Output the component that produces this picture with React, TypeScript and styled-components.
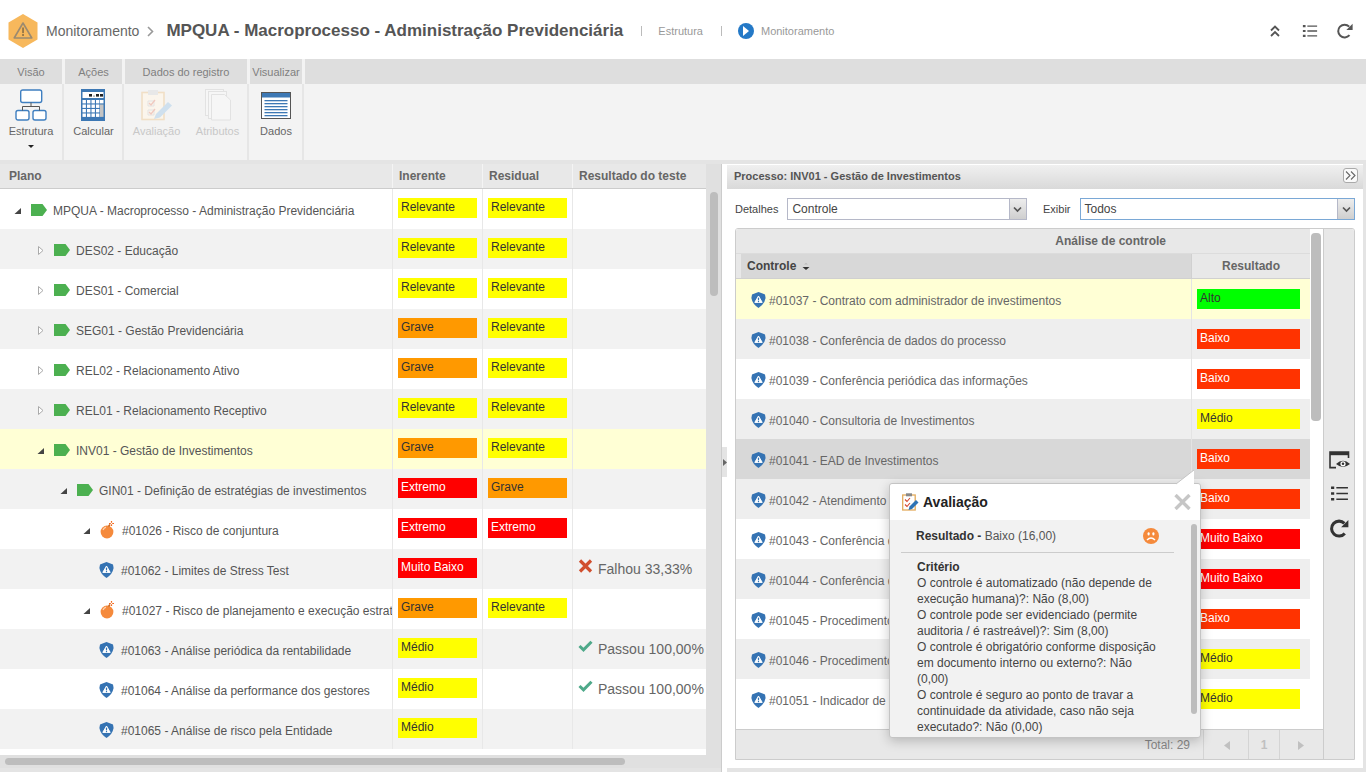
import React from 'react';
import styled, { createGlobalStyle } from 'styled-components';

type Level = 'alto' | 'baixo' | 'muitoBaixo' | 'medio' | 'relevante' | 'grave' | 'extremo';

const levelColors: Record<Level, { bg: string; fg: string; label: string }> = {
  alto: { bg: '#00ff00', fg: '#333', label: 'Alto' },
  baixo: { bg: '#ff3300', fg: '#fff', label: 'Baixo' },
  muitoBaixo: { bg: '#ff0000', fg: '#fff', label: 'Muito Baixo' },
  medio: { bg: '#ffff00', fg: '#333', label: 'Médio' },
  relevante: { bg: '#ffff00', fg: '#333', label: 'Relevante' },
  grave: { bg: '#ff9900', fg: '#333', label: 'Grave' },
  extremo: { bg: '#ff0000', fg: '#fff', label: 'Extremo' },
};

type PlanRow = {
  depth: number;
  kind: 'process' | 'risk' | 'control';
  open?: boolean;
  text: string;
  inerente: Level;
  residual?: Level;
  test?: { ok: boolean; text: string };
  selected?: boolean;
};

const planRows: PlanRow[] = [
  { depth: 0, kind: 'process', open: true, text: 'MPQUA - Macroprocesso - Administração Previdenciária', inerente: 'relevante', residual: 'relevante' },
  { depth: 1, kind: 'process', open: false, text: 'DES02 - Educação', inerente: 'relevante', residual: 'relevante' },
  { depth: 1, kind: 'process', open: false, text: 'DES01 - Comercial', inerente: 'relevante', residual: 'relevante' },
  { depth: 1, kind: 'process', open: false, text: 'SEG01 - Gestão Previdenciária', inerente: 'grave', residual: 'relevante' },
  { depth: 1, kind: 'process', open: false, text: 'REL02 - Relacionamento Ativo', inerente: 'grave', residual: 'relevante' },
  { depth: 1, kind: 'process', open: false, text: 'REL01 - Relacionamento Receptivo', inerente: 'relevante', residual: 'relevante' },
  { depth: 1, kind: 'process', open: true, text: 'INV01 - Gestão de Investimentos', inerente: 'grave', residual: 'relevante', selected: true },
  { depth: 2, kind: 'process', open: true, text: 'GIN01 - Definição de estratégias de investimentos', inerente: 'extremo', residual: 'grave' },
  { depth: 3, kind: 'risk', open: true, text: '#01026 - Risco de conjuntura', inerente: 'extremo', residual: 'extremo' },
  { depth: 4, kind: 'control', text: '#01062 - Limites de Stress Test', inerente: 'muitoBaixo', test: { ok: false, text: 'Falhou 33,33%' } },
  { depth: 3, kind: 'risk', open: true, text: '#01027 - Risco de planejamento e execução estratégica', inerente: 'grave', residual: 'relevante' },
  { depth: 4, kind: 'control', text: '#01063 - Análise periódica da rentabilidade', inerente: 'medio', test: { ok: true, text: 'Passou 100,00%' } },
  { depth: 4, kind: 'control', text: '#01064 - Análise da performance dos gestores', inerente: 'medio', test: { ok: true, text: 'Passou 100,00%' } },
  { depth: 4, kind: 'control', text: '#01065 - Análise de risco pela Entidade', inerente: 'medio' },
];

const controlRows: { text: string; level: Level }[] = [
  { text: '#01037 - Contrato com administrador de investimentos', level: 'alto' },
  { text: '#01038 - Conferência de dados do processo', level: 'baixo' },
  { text: '#01039 - Conferência periódica das informações', level: 'baixo' },
  { text: '#01040 - Consultoria de Investimentos', level: 'medio' },
  { text: '#01041 - EAD de Investimentos', level: 'baixo' },
  { text: '#01042 - Atendimento ao participante', level: 'baixo' },
  { text: '#01043 - Conferência de relatórios', level: 'muitoBaixo' },
  { text: '#01044 - Conferência de valores', level: 'muitoBaixo' },
  { text: '#01045 - Procedimento de aprovação', level: 'baixo' },
  { text: '#01046 - Procedimento de registro', level: 'medio' },
  { text: '#01051 - Indicador de desempenho', level: 'medio' },
];

const criteria = [
  'O controle é automatizado (não depende de execução humana)?: Não (8,00)',
  'O controle pode ser evidenciado (permite auditoria / é rastreável)?: Sim (8,00)',
  'O controle é obrigatório conforme disposição em documento interno ou externo?: Não (0,00)',
  'O controle é seguro ao ponto de travar a continuidade da atividade, caso não seja executado?: Não (0,00)',
];

const GlobalStyle = createGlobalStyle`
  html, body {
    margin: 0;
    height: 100%;
    overflow: hidden;
    background: #e4e4e4;
  }
  body {
    font-family: "Liberation Sans", Arial, sans-serif;
    color: #555;
  }
  * {
    box-sizing: border-box;
  }
`;

const Page = styled.div`
  width: 1366px;
  height: 772px;
  display: flex;
  flex-direction: column;
  overflow: hidden;
`;

const Header = styled.header`
  height: 59px;
  flex: none;
  background: #fff;
  display: flex;
  align-items: center;
  padding: 3px 12px 0 8px;
`;

const Crumb = styled.span`
  margin-left: 8px;
  font-size: 14px;
  color: #666;
`;

const CrumbArrow = styled.span`
  display: flex;
  margin: 0 12px 0 7px;
`;

const Title = styled.h1`
  margin: 0;
  font-size: 17px;
  font-weight: 700;
  color: #555;
  white-space: nowrap;
`;

const Divider = styled.span`
  width: 1px;
  height: 10px;
  background: #bbb;
  margin: 0 16px 0 18px;
`;

const NavLink = styled.span`
  font-size: 11px;
  color: #999;
`;

const PlayDot = styled.span`
  width: 16px;
  height: 16px;
  border-radius: 50%;
  background: #2479c7;
  display: flex;
  align-items: center;
  justify-content: center;
  margin-right: 7px;
`;

const HeaderTools = styled.div`
  margin-left: auto;
  display: flex;
  align-items: center;
  gap: 18px;
`;

const Ribbon = styled.div`
  height: 101px;
  flex: none;
  display: flex;
  background: #f3f3f3;
`;

const Group = styled.div<{ $width: number }>`
  width: ${(p) => p.$width}px;
  flex: none;
  display: flex;
  flex-direction: column;
`;

const GroupTitle = styled.div`
  height: 25px;
  flex: none;
  background: #dedede;
  margin-right: 3px;
  font-size: 11px;
  color: #808080;
  display: flex;
  align-items: center;
  justify-content: center;
`;

const RibbonRest = styled.div`
  flex: 1;
  height: 25px;
  background: #dedede;
`;

const GroupBody = styled.div`
  flex: 1;
  display: flex;
  justify-content: space-around;
  border-right: 2px solid #e6e6e6;
  margin-right: 1px;
`;

const RibbonButton = styled.div<{ $off?: boolean }>`
  display: flex;
  flex-direction: column;
  align-items: center;
  font-size: 11px;
  color: ${(p) => (p.$off ? '#c8c8c8' : '#666')};
`;

const RibbonIcon = styled.div`
  height: 41px;
  padding-top: 5px;
  display: flex;
  align-items: flex-start;
`;

const RibbonCaret = styled.span`
  width: 0;
  height: 0;
  margin-top: 8px;
  border-left: 3px solid transparent;
  border-right: 3px solid transparent;
  border-top: 3px solid #222;
`;

const Main = styled.div`
  flex: 1;
  min-height: 0;
  display: flex;
  padding-top: 4px;
  background: #e4e4e4;
`;

const LeftPanel = styled.section`
  width: 721px;
  flex: none;
  display: flex;
  flex-direction: column;
  padding-bottom: 4px;
`;

const TableArea = styled.div`
  flex: 1;
  min-height: 0;
  display: flex;
`;

const PlanTable = styled.div`
  width: 706px;
  flex: none;
  background: #fff;
  overflow: hidden;
`;

const PlanHead = styled.div`
  height: 25px;
  display: flex;
  background: #e8e8e8;
  border-bottom: 1px solid #ccc;
`;

const HeadCell = styled.div<{ $width: number }>`
  width: ${(p) => p.$width}px;
  flex: none;
  padding: 0 6px;
  font-size: 12px;
  font-weight: 700;
  color: #666;
  line-height: 24px;
  border-right: 1px solid #f4f4f4;
  &:first-child {
    padding-left: 9px;
  }
  &:last-child {
    border-right: 0;
  }
`;

const PlanLine = styled.div<{ $tone: 'plain' | 'alt' | 'selected' }>`
  height: 40px;
  display: flex;
  background: ${(p) =>
    p.$tone === 'selected' ? '#ffffd5' : p.$tone === 'alt' ? '#f2f2f2' : '#fff'};
`;

const PlanCell = styled.div<{ $width: number }>`
  width: ${(p) => p.$width}px;
  flex: none;
  border-right: 1px solid #e8e8e8;
  display: flex;
  align-items: center;
  overflow: hidden;
  &:last-child {
    border-right: 0;
  }
`;

const TreeName = styled(PlanCell)<{ $depth: number }>`
  padding-left: ${(p) => 13 + p.$depth * 23}px;
  padding-top: 4px;
  font-size: 12px;
  color: #555;
  white-space: nowrap;
`;

const TreeToggle = styled.span`
  width: 9px;
  height: 9px;
  flex: none;
  display: flex;
  margin: -2px 9px 0 0;
`;

const NodeIcon = styled.span<{ $kind: PlanRow['kind'] }>`
  flex: none;
  display: flex;
  margin-top: -2px;
  margin-left: ${(p) => (p.$kind === 'control' ? '-6px' : '0')};
  margin-right: ${(p) => (p.$kind === 'control' ? '7px' : '6px')};
`;

const Tag = styled.span<{ $level: Level; $width: number }>`
  width: ${(p) => p.$width}px;
  height: 20px;
  margin: -2px 0 0 5px;
  padding-left: 3px;
  flex: none;
  font-size: 12px;
  line-height: 19px;
  background: ${(p) => levelColors[p.$level].bg};
  color: ${(p) => levelColors[p.$level].fg};
  white-space: nowrap;
`;

const TestResult = styled.div`
  display: flex;
  align-items: center;
  gap: 5px;
  margin-left: 5px;
  font-size: 14px;
  color: #666;
  white-space: nowrap;
`;

const TestMark = styled.span`
  display: flex;
  margin-top: -6px;
`;

const VTrack = styled.div`
  width: 15px;
  flex: none;
  background: #e0e0e0;
  padding: 28px 3px 0 4px;
`;

const VThumb = styled.div<{ $h: number }>`
  height: ${(p) => p.$h}px;
  background: #bdbdbd;
  border-radius: 4px;
`;

const HTrack = styled.div`
  height: 13px;
  flex: none;
  background: #e0e0e0;
  padding: 3px 0 0 5px;
`;

const HThumb = styled.div`
  width: 620px;
  height: 7px;
  background: #bdbdbd;
  border-radius: 4px;
`;

const Splitter = styled.div`
  width: 6px;
  flex: none;
  background: #fff;
  border-left: 1px solid #ccc;
  display: flex;
  flex-direction: column;
  justify-content: flex-start;
  padding-top: 283px;
`;

const SplitterHandle = styled.div`
  width: 5px;
  height: 30px;
  background: #e4e4e4;
  display: flex;
  align-items: center;
  justify-content: center;
`;

const RightPanel = styled.section`
  position: relative;
  flex: 1;
  min-width: 0;
  display: flex;
  flex-direction: column;
  background: #fff;
  margin: 0 3px 4px 0;
  padding-top: 1px;
`;

const PanelBar = styled.div`
  height: 24px;
  flex: none;
  background: linear-gradient(#f0f0f0, #d9d9d9);
  display: flex;
  align-items: center;
  justify-content: space-between;
  padding: 0 5px 3px 7px;
  font-size: 11px;
  font-weight: 700;
  color: #555;
`;

const CollapseButton = styled.span`
  width: 15px;
  height: 15px;
  border: 1px solid #aaa;
  border-radius: 3px;
  background: #fafafa;
  display: flex;
  align-items: center;
  justify-content: center;
`;

const FilterRow = styled.div`
  height: 39px;
  flex: none;
  display: flex;
  align-items: center;
  padding: 1px 8px 0 8px;
  font-size: 11px;
  color: #444;
`;

const SelectBox = styled.div<{ $width: number; $focus?: boolean }>`
  width: ${(p) => p.$width}px;
  height: 22px;
  margin-left: 9px;
  border: 1px solid ${(p) => (p.$focus ? '#7aa8d6' : '#b5b8c8')};
  background: #fff;
  display: flex;
  align-items: center;
  justify-content: space-between;
  padding-left: 4px;
  font-size: 12px;
  color: #444;
`;

const SelectArrow = styled.span`
  width: 17px;
  height: 20px;
  background: linear-gradient(#ededed, #cfcfcf);
  border-left: 1px solid #b5b8c8;
  display: flex;
  align-items: center;
  justify-content: center;
`;

const SecondLabel = styled.span`
  margin-left: 16px;
`;

const GridFrame = styled.div`
  height: 532px;
  margin: 0 8px;
  flex: none;
  border: 1px solid #ccc;
  border-radius: 3px 3px 0 0;
  display: grid;
  grid-template-columns: 587px 1fr;
  overflow: hidden;
`;

const GridMain = styled.div`
  display: flex;
  flex-direction: column;
  min-height: 0;
  background: #fff;
`;

const GridColumns = styled.div`
  height: 500px;
  flex: none;
  display: flex;
`;

const GridTable = styled.div`
  width: 574px;
  flex: none;
  display: flex;
  flex-direction: column;
  height: 486px;
  overflow: hidden;
`;

const GridCaption = styled.div`
  height: 24px;
  flex: none;
  background: #e8e8e8;
  font-size: 12px;
  font-weight: 700;
  color: #666;
  text-align: right;
  padding: 5px 144px 0 0;
`;

const GridHead = styled.div`
  height: 26px;
  flex: none;
  display: flex;
  background: #e8e8e8;
  border-top: 1px solid #dcdcdc;
  border-bottom: 1px solid #d0d0d0;
`;

const HeadControl = styled.div`
  flex: 1;
  background: #d8d8d8;
  margin-left: 5px;
  padding-left: 6px;
  display: flex;
  align-items: center;
  gap: 6px;
  font-size: 12px;
  font-weight: 700;
  color: #444;
`;

const SortMark = styled.span`
  display: flex;
`;

const HeadResult = styled.div`
  width: 119px;
  flex: none;
  background: #e8e8e8;
  border-left: 1px solid #d0d0d0;
  text-align: center;
  font-size: 12px;
  font-weight: 700;
  line-height: 24px;
  color: #666;
`;

const GridLine = styled.div<{ $tone: 'plain' | 'alt' | 'selected' | 'active' }>`
  height: 40px;
  flex: none;
  display: flex;
  background: ${(p) =>
    p.$tone === 'selected'
      ? '#ffffd5'
      : p.$tone === 'active'
      ? '#d8d8d8'
      : p.$tone === 'alt'
      ? '#eeeeee'
      : '#fff'};
`;

const ControlName = styled.div`
  flex: 1;
  min-width: 0;
  padding: 4px 0 0 15px;
  display: flex;
  align-items: center;
  gap: 3px;
  font-size: 12px;
  color: #666;
  white-space: nowrap;
  overflow: hidden;
  svg {
    margin-top: -3px;
  }
`;

const ResultCell = styled.div`
  width: 119px;
  flex: none;
  border-left: 1px solid #e4e4e4;
  display: flex;
  align-items: center;
  padding-top: 2px;
`;

const GridScroll = styled.div`
  width: 13px;
  flex: none;
  background: #fff;
  padding: 4px 2px 0 1px;
`;

const GridFooter = styled.div`
  flex: 1;
  display: flex;
  justify-content: flex-end;
  background: #e8e8e8;
  border-top: 1px solid #ccc;
`;

const TotalLabel = styled.span`
  font-size: 12px;
  color: #888;
  line-height: 30px;
  padding-right: 13px;
`;

const PagerCell = styled.span<{ $width: number }>`
  width: ${(p) => p.$width}px;
  border-left: 1px solid #d4d4d4;
  display: flex;
  align-items: center;
  justify-content: center;
  font-size: 12px;
  font-weight: 700;
  color: #c0c0c0;
`;

const SideTools = styled.div`
  background: #e8e8e8;
  border-left: 1px solid #ccc;
  display: flex;
  flex-direction: column;
  align-items: center;
  padding-top: 222px;
  gap: 15px;
`;

const Popover = styled.div`
  position: absolute;
  left: 162px;
  top: 319px;
  width: 312px;
  height: 255px;
  background: #f2f2f2;
  border: 1px solid #c4c4c4;
  border-radius: 3px;
  box-shadow: 0 3px 12px rgba(0, 0, 0, 0.22);
  display: flex;
  flex-direction: column;
`;

const PopoverPointer = styled.svg`
  position: absolute;
  right: 2px;
  top: -15px;
`;

const PopoverHead = styled.div`
  height: 36px;
  flex: none;
  background: #fff;
  display: flex;
  align-items: center;
  padding-left: 12px;
  gap: 4px;
  font-size: 14px;
  font-weight: 700;
  color: #222;
  border-radius: 3px 3px 0 0;
`;

const PopoverClose = styled.span`
  margin-left: auto;
  margin-right: 9px;
  display: flex;
`;

const PopoverBody = styled.div`
  flex: 1;
  min-height: 0;
  position: relative;
  padding: 0 0 0 11px;
  overflow: hidden;
`;

const PopoverScroll = styled.div`
  position: absolute;
  right: 3px;
  top: 4px;
  width: 6px;
  height: 190px;
  background: #bdbdbd;
  border-radius: 3px;
`;

const ResultLine = styled.div`
  width: 273px;
  height: 33px;
  border-bottom: 1px solid #ccc;
  padding: 0 15px 0 15px;
  display: flex;
  align-items: center;
  justify-content: space-between;
  font-size: 12px;
  color: #555;
  b {
    font-weight: 700;
    color: #333;
  }
`;

const CriteriaList = styled.div`
  width: 257px;
  padding: 6px 0 0 16px;
  font-size: 12px;
  line-height: 16px;
  color: #444;
`;

const CriteriaTitle = styled.div`
  font-weight: 700;
  color: #333;
`;

/* drawings */

const LogoHex = () => (
  <svg width="30" height="34" viewBox="0 0 30 34">
    <path d="M15 0 L29.5 8.4 V25.6 L15 34 L.5 25.6 V8.4 Z" fill="#f7b85c" />
    <path d="M15 9 L23.8 24 H6.2 Z" fill="none" stroke="#9b8a70" strokeWidth="1.6" strokeLinejoin="round" />
    <rect x="14.1" y="13.5" width="1.9" height="5.6" fill="#9b7a48" />
    <rect x="14.1" y="20" width="1.9" height="2" fill="#9b7a48" />
  </svg>
);

const ChevronRight = ({ size = 8 }: { size?: number }) => (
  <svg width={size} height={size + 3} viewBox="0 0 8 11">
    <path d="M2 1 L6.5 5.5 L2 10" fill="none" stroke="#999" strokeWidth="1.6" />
  </svg>
);

const PlayGlyph = () => (
  <svg width="8" height="10" viewBox="0 0 8 10">
    <path d="M1 0 L7 5 L1 10 Z" fill="#fff" />
  </svg>
);

const CollapseUp = () => (
  <svg width="18" height="16" viewBox="0 0 18 16">
    <path d="M5 7.5 L9 3.5 L13 7.5 M5 13 L9 9 L13 13" fill="none" stroke="#555" strokeWidth="1.8" />
  </svg>
);

const ListGlyph = ({ size = 18, color = '#555' }: { size?: number; color?: string }) => (
  <svg width={size} height={size} viewBox="0 0 18 18">
    <path d="M1 3.5 H4 M1 9 H4 M1 14.5 H4" stroke={color} strokeWidth="2.4" />
    <path d="M6 3.5 H17 M6 9 H17 M6 14.5 H17" stroke={color} strokeWidth="1.5" />
  </svg>
);

const RefreshGlyph = ({ size = 18, color = '#555', weight = 2 }: { size?: number; color?: string; weight?: number }) => (
  <svg width={size} height={size} viewBox="0 0 18 18">
    <path d="M13.5 13.2 A6.4 6.4 0 1 1 13.2 4.6" fill="none" stroke={color} strokeWidth={weight} />
    <path d="M16.6 1.8 V8 H10.4 Z" fill={color} />
  </svg>
);

const OrgChartIcon = () => (
  <svg width="32" height="32" viewBox="0 0 32 32">
    <g fill="#fff" stroke="#3f7fc0" strokeWidth="1.4">
      <rect x="5.7" y="1" width="21" height="12.5" rx="2" />
      <rect x="1" y="21.5" width="13" height="9.5" rx="2" />
      <rect x="18" y="21.5" width="13" height="9.5" rx="2" />
    </g>
    <path d="M16 13.5 V17.5 M7.5 21.5 V17.5 H24.5 V21.5" fill="none" stroke="#555" strokeWidth="1" />
  </svg>
);

const CalculatorIcon = () => (
  <svg width="24" height="32" viewBox="0 0 24 32">
    <rect width="24" height="32" fill="#3d78b4" />
    <rect x="1.5" y="3" width="21" height="6" fill="#fff" />
    <g fill="#222">
      <rect x="8" y="5" width="3" height="2.6" />
      <rect x="12.5" y="6.6" width="1" height="1" />
      <rect x="15" y="5" width="3" height="2.6" />
      <rect x="19" y="5" width="3" height="2.6" />
    </g>
    {[11, 15.5, 20, 24.5].map((y) =>
      [1.5, 6, 10.5].map((x) => <rect key={`${x}-${y}`} x={x} y={y} width="3.4" height="3.4" fill="#fff" />)
    )}
    <rect x="15" y="11" width="3.4" height="3.4" fill="#fff" />
    <rect x="19" y="11" width="3.5" height="3.4" fill="#fff" />
    <rect x="15" y="15.5" width="3.4" height="3.4" fill="#fff" />
    <rect x="15" y="20" width="3.4" height="3.4" fill="#fff" />
    <rect x="15" y="24.5" width="3.4" height="3.4" fill="#fff" />
    <rect x="19" y="15.5" width="3.5" height="12.4" fill="#c4c4c4" />
  </svg>
);

const ClipboardFaded = () => (
  <svg width="32" height="32" viewBox="0 0 32 32">
    <rect x="1" y="3.5" width="22" height="27" fill="#fbf5ec" stroke="#f1dfc6" strokeWidth="1.6" />
    <rect x="7" y="1" width="10" height="5" fill="#e8e8e8" />
    <path d="M7 12 H13 V17 H7 Z M7 21 H13 V26 H7 Z" fill="none" stroke="#e3e3e3" />
    <path d="M8 14 L10 16 L14 11 M8 23 L10 25 L14 20" fill="none" stroke="#f0c9bf" strokeWidth="1.3" />
    <path d="M13 30 L15 25 L27 13 L31 16.5 L19 28.5 Z" fill="#cfe0ee" />
  </svg>
);

const PagesFaded = () => (
  <svg width="26" height="32" viewBox="0 0 26 32">
    <g fill="#f6f6f6" stroke="#e2e2e2" strokeWidth="1">
      <rect x="0.5" y="0.5" width="18" height="26" />
      <rect x="3.5" y="2.5" width="18" height="27" />
      <path d="M6.5 5.5 H19.5 L25.5 11 V31 H6.5 Z" />
    </g>
  </svg>
);

const DataWindowIcon = () => (
  <svg width="30" height="32" viewBox="0 0 30 32">
    <rect x="0.5" y="3.5" width="29" height="26" fill="#fff" stroke="#555" />
    <rect x="1" y="4" width="28" height="4.5" fill="#3d78b4" />
    {[11, 14, 17, 20, 23, 26].map((y) => (
      <rect key={y} x="3.5" y={y} width="23" height="1.3" fill="#3d78b4" />
    ))}
  </svg>
);

const ProcessTag = () => (
  <svg width="16" height="12" viewBox="0 0 16 12">
    <path d="M0 0 H11.5 L16 6 L11.5 12 H0 Z" fill="#4cb050" />
  </svg>
);

const RiskBomb = () => (
  <svg width="16" height="18" viewBox="0 0 16 18">
    <circle cx="7" cy="11" r="6.4" fill="#f58a3c" />
    <path d="M3 9 A4.5 4.5 0 0 1 6 6.2" fill="none" stroke="#fcd3b2" strokeWidth="1.2" />
    <path d="M8.5 5.5 L10 3.6" stroke="#c96a25" strokeWidth="1.6" />
    <path d="M11.5 0 V1.8 M11.5 3.2 V5 M9 2.5 H10.8 M12.2 2.5 H14" stroke="#f26a1e" strokeWidth="1.2" />
  </svg>
);

const ControlShield = () => (
  <svg width="15" height="16" viewBox="0 0 15 16">
    <path d="M7.5 0 L14 2.4 L14.6 6 Q13.6 12 7.5 16 Q1.4 12 .4 6 L1 2.4 Z" fill="#3573b3" />
    <path d="M7.5 4 L11.2 10.4 H3.8 Z" fill="#fff" stroke="#fff" strokeLinejoin="round" />
    <rect x="6.9" y="5.6" width="1.2" height="2.8" fill="#3573b3" />
    <rect x="6.9" y="9" width="1.2" height="1.2" fill="#3573b3" />
  </svg>
);

const ToggleOpen = () => (
  <svg width="9" height="9" viewBox="0 0 9 9">
    <path d="M8 2 V8 H1.5 Z" fill="#444" />
  </svg>
);

const ToggleClosed = () => (
  <svg width="9" height="9" viewBox="0 0 9 9">
    <path d="M2.5 .5 L7 4.5 L2.5 8.5 Z" fill="#fff" stroke="#aaa" />
  </svg>
);

const FailMark = () => (
  <svg width="15" height="14" viewBox="0 0 15 14">
    <path d="M2 1.5 L13 12.5 M13 1.5 L2 12.5" stroke="#d14f2e" strokeWidth="3.2" />
  </svg>
);

const PassMark = () => (
  <svg width="15" height="12" viewBox="0 0 15 12">
    <path d="M1.5 6 L5.5 9.8 L13.5 1.8" fill="none" stroke="#4fa98a" strokeWidth="3" />
  </svg>
);

const DoubleRight = () => (
  <svg width="11" height="9" viewBox="0 0 11 9">
    <path d="M1 .5 L5 4.5 L1 8.5 M6 .5 L10 4.5 L6 8.5" fill="none" stroke="#666" strokeWidth="1.1" />
  </svg>
);

const SelectChevron = () => (
  <svg width="9" height="7" viewBox="0 0 9 7">
    <path d="M1 1.5 L4.5 5 L8 1.5" fill="none" stroke="#555" strokeWidth="1.7" />
  </svg>
);

const SplitArrow = () => (
  <svg width="4" height="7" viewBox="0 0 4 7">
    <path d="M0 0 L4 3.5 L0 7 Z" fill="#666" />
  </svg>
);

const SortGlyph = () => (
  <svg width="8" height="8" viewBox="0 0 8 8">
    <path d="M2 2.6 L4 .8 L6 2.6 Z" fill="#bbb" />
    <path d="M.5 5 H7.5 L4 8 Z" fill="#333" />
  </svg>
);

const WindowEye = () => (
  <svg width="21" height="18" viewBox="0 0 21 18">
    <path d="M1 15 V1 H19.5 V7" fill="none" stroke="#333" strokeWidth="1.6" />
    <path d="M1 15 V16.6 H7" fill="none" stroke="#333" strokeWidth="1.6" />
    <rect x="1" y="1" width="18.5" height="3.2" fill="#333" />
    <path d="M7 13 Q14 6.5 21 13 Q14 18.8 7 13 Z" fill="#333" />
    <circle cx="14" cy="12.8" r="2.6" fill="#fff" />
    <circle cx="14" cy="12.8" r="1.3" fill="#333" />
  </svg>
);

const AssessIcon = () => (
  <svg width="17" height="18" viewBox="0 0 17 18">
    <rect x=".7" y="2" width="12.5" height="15" fill="#fff" stroke="#e3ab5c" strokeWidth="1.3" />
    <rect x="4" y=".3" width="6" height="3" fill="#888" />
    <path d="M3 6.5 L5 8.5 L8 5 M3 11.5 L5 13.5 L8 10" fill="none" stroke="#d5452c" strokeWidth="1.1" />
    <path d="M6.5 17 L7.5 13.5 L14 7 L16.5 9.5 L10 16 Z" fill="#2f74b5" />
  </svg>
);

const SadFace = () => (
  <svg width="16" height="16" viewBox="0 0 16 16">
    <circle cx="8" cy="8" r="8" fill="#f58a3c" />
    <rect x="4.6" y="4.2" width="2" height="3.2" rx="1" fill="#fff" />
    <rect x="9.4" y="4.2" width="2" height="3.2" rx="1" fill="#fff" />
    <path d="M4 12 Q8 8 12 12" fill="none" stroke="#fff" strokeWidth="1.5" />
  </svg>
);

const CloseCross = () => (
  <svg width="17" height="16" viewBox="0 0 17 16">
    <path d="M1.5 1 L15.5 15 M15.5 1 L1.5 15" stroke="#c6c6c6" strokeWidth="3.4" />
  </svg>
);

const PagerArrow = ({ left }: { left?: boolean }) => (
  <svg width="7" height="9" viewBox="0 0 7 9">
    <path d={left ? 'M7 0 L1 4.5 L7 9 Z' : 'M0 0 L6 4.5 L0 9 Z'} fill="#c0c0c0" />
  </svg>
);

function nodeIcon(kind: PlanRow['kind']) {
  if (kind === 'process') return <ProcessTag />;
  if (kind === 'risk') return <RiskBomb />;
  return <ControlShield />;
}

export default function App() {
  return (
    <Page>
      <GlobalStyle />
      <Header>
        <LogoHex />
        <Crumb>Monitoramento</Crumb>
        <CrumbArrow>
          <ChevronRight />
        </CrumbArrow>
        <Title>MPQUA - Macroprocesso - Administração Previdenciária</Title>
        <Divider />
        <NavLink>Estrutura</NavLink>
        <Divider />
        <PlayDot>
          <PlayGlyph />
        </PlayDot>
        <NavLink>Monitoramento</NavLink>
        <HeaderTools>
          <CollapseUp />
          <ListGlyph size={16} />
          <RefreshGlyph />
        </HeaderTools>
      </Header>

      <Ribbon>
        <Group $width={65}>
          <GroupTitle>Visão</GroupTitle>
          <GroupBody>
            <RibbonButton>
              <RibbonIcon>
                <OrgChartIcon />
              </RibbonIcon>
              Estrutura
              <RibbonCaret />
            </RibbonButton>
          </GroupBody>
        </Group>
        <Group $width={60}>
          <GroupTitle>Ações</GroupTitle>
          <GroupBody>
            <RibbonButton>
              <RibbonIcon>
                <CalculatorIcon />
              </RibbonIcon>
              Calcular
            </RibbonButton>
          </GroupBody>
        </Group>
        <Group $width={125}>
          <GroupTitle>Dados do registro</GroupTitle>
          <GroupBody>
            <RibbonButton $off>
              <RibbonIcon>
                <ClipboardFaded />
              </RibbonIcon>
              Avaliação
            </RibbonButton>
            <RibbonButton $off>
              <RibbonIcon>
                <PagesFaded />
              </RibbonIcon>
              Atributos
            </RibbonButton>
          </GroupBody>
        </Group>
        <Group $width={55}>
          <GroupTitle>Visualizar</GroupTitle>
          <GroupBody>
            <RibbonButton>
              <RibbonIcon>
                <DataWindowIcon />
              </RibbonIcon>
              Dados
            </RibbonButton>
          </GroupBody>
        </Group>
        <RibbonRest />
      </Ribbon>

      <Main>
        <LeftPanel>
          <TableArea>
            <PlanTable>
              <PlanHead>
                <HeadCell $width={393}>Plano</HeadCell>
                <HeadCell $width={90}>Inerente</HeadCell>
                <HeadCell $width={90}>Residual</HeadCell>
                <HeadCell $width={133}>Resultado do teste</HeadCell>
              </PlanHead>
              {planRows.map((row, i) => (
                <PlanLine key={row.text} $tone={row.selected ? 'selected' : i % 2 ? 'alt' : 'plain'}>
                  <TreeName $width={393} $depth={row.depth}>
                    {row.open !== undefined && (
                      <TreeToggle>{row.open ? <ToggleOpen /> : <ToggleClosed />}</TreeToggle>
                    )}
                    <NodeIcon $kind={row.kind}>{nodeIcon(row.kind)}</NodeIcon>
                    {row.text}
                  </TreeName>
                  <PlanCell $width={90}>
                    <Tag $level={row.inerente} $width={79}>
                      {levelColors[row.inerente].label}
                    </Tag>
                  </PlanCell>
                  <PlanCell $width={90}>
                    {row.residual && (
                      <Tag $level={row.residual} $width={79}>
                        {levelColors[row.residual].label}
                      </Tag>
                    )}
                  </PlanCell>
                  <PlanCell $width={133}>
                    {row.test && (
                      <TestResult>
                        <TestMark>{row.test.ok ? <PassMark /> : <FailMark />}</TestMark>
                        {row.test.text}
                      </TestResult>
                    )}
                  </PlanCell>
                </PlanLine>
              ))}
            </PlanTable>
            <VTrack>
              <VThumb $h={104} />
            </VTrack>
          </TableArea>
          <HTrack>
            <HThumb />
          </HTrack>
        </LeftPanel>

        <Splitter>
          <SplitterHandle>
            <SplitArrow />
          </SplitterHandle>
        </Splitter>

        <RightPanel>
          <PanelBar>
            Processo: INV01 - Gestão de Investimentos
            <CollapseButton>
              <DoubleRight />
            </CollapseButton>
          </PanelBar>
          <FilterRow>
            Detalhes
            <SelectBox $width={240}>
              Controle
              <SelectArrow>
                <SelectChevron />
              </SelectArrow>
            </SelectBox>
            <SecondLabel>Exibir</SecondLabel>
            <SelectBox $width={276} $focus>
              Todos
              <SelectArrow>
                <SelectChevron />
              </SelectArrow>
            </SelectBox>
          </FilterRow>
          <GridFrame>
            <GridMain>
              <GridColumns>
                <GridTable>
                  <GridCaption>Análise de controle</GridCaption>
                  <GridHead>
                    <HeadControl>
                      Controle
                      <SortMark>
                        <SortGlyph />
                      </SortMark>
                    </HeadControl>
                    <HeadResult>Resultado</HeadResult>
                  </GridHead>
                  {controlRows.map((row, i) => (
                    <GridLine
                      key={row.text}
                      $tone={i === 0 ? 'selected' : i === 4 ? 'active' : i % 2 ? 'alt' : 'plain'}
                    >
                      <ControlName>
                        <ControlShield />
                        {row.text}
                      </ControlName>
                      <ResultCell>
                        <Tag $level={row.level} $width={103}>
                          {levelColors[row.level].label}
                        </Tag>
                      </ResultCell>
                    </GridLine>
                  ))}
                </GridTable>
                <GridScroll>
                  <VThumb $h={188} />
                </GridScroll>
              </GridColumns>
              <GridFooter>
                <TotalLabel>Total: 29</TotalLabel>
                <PagerCell $width={45}>
                  <PagerArrow left />
                </PagerCell>
                <PagerCell $width={31}>1</PagerCell>
                <PagerCell $width={44}>
                  <PagerArrow />
                </PagerCell>
              </GridFooter>
            </GridMain>
            <SideTools>
              <WindowEye />
              <ListGlyph size={19} color="#333" />
              <RefreshGlyph size={21} color="#333" weight={2.6} />
            </SideTools>
          </GridFrame>

          <Popover>
            <PopoverPointer width="22" height="16" viewBox="0 0 22 16">
              <path d="M0 15 L18 1 V15 Z" fill="#fff" />
              <path d="M0 15 L18 1" fill="none" stroke="#c4c4c4" />
            </PopoverPointer>
            <PopoverHead>
              <AssessIcon />
              Avaliação
              <PopoverClose>
                <CloseCross />
              </PopoverClose>
            </PopoverHead>
            <PopoverBody>
              <ResultLine>
                <span>
                  <b>Resultado - </b>
                  Baixo (16,00)
                </span>
                <SadFace />
              </ResultLine>
              <CriteriaList>
                <CriteriaTitle>Critério</CriteriaTitle>
                {criteria.map((c) => (
                  <div key={c}>{c}</div>
                ))}
              </CriteriaList>
              <PopoverScroll />
            </PopoverBody>
          </Popover>
        </RightPanel>
      </Main>
    </Page>
  );
}
